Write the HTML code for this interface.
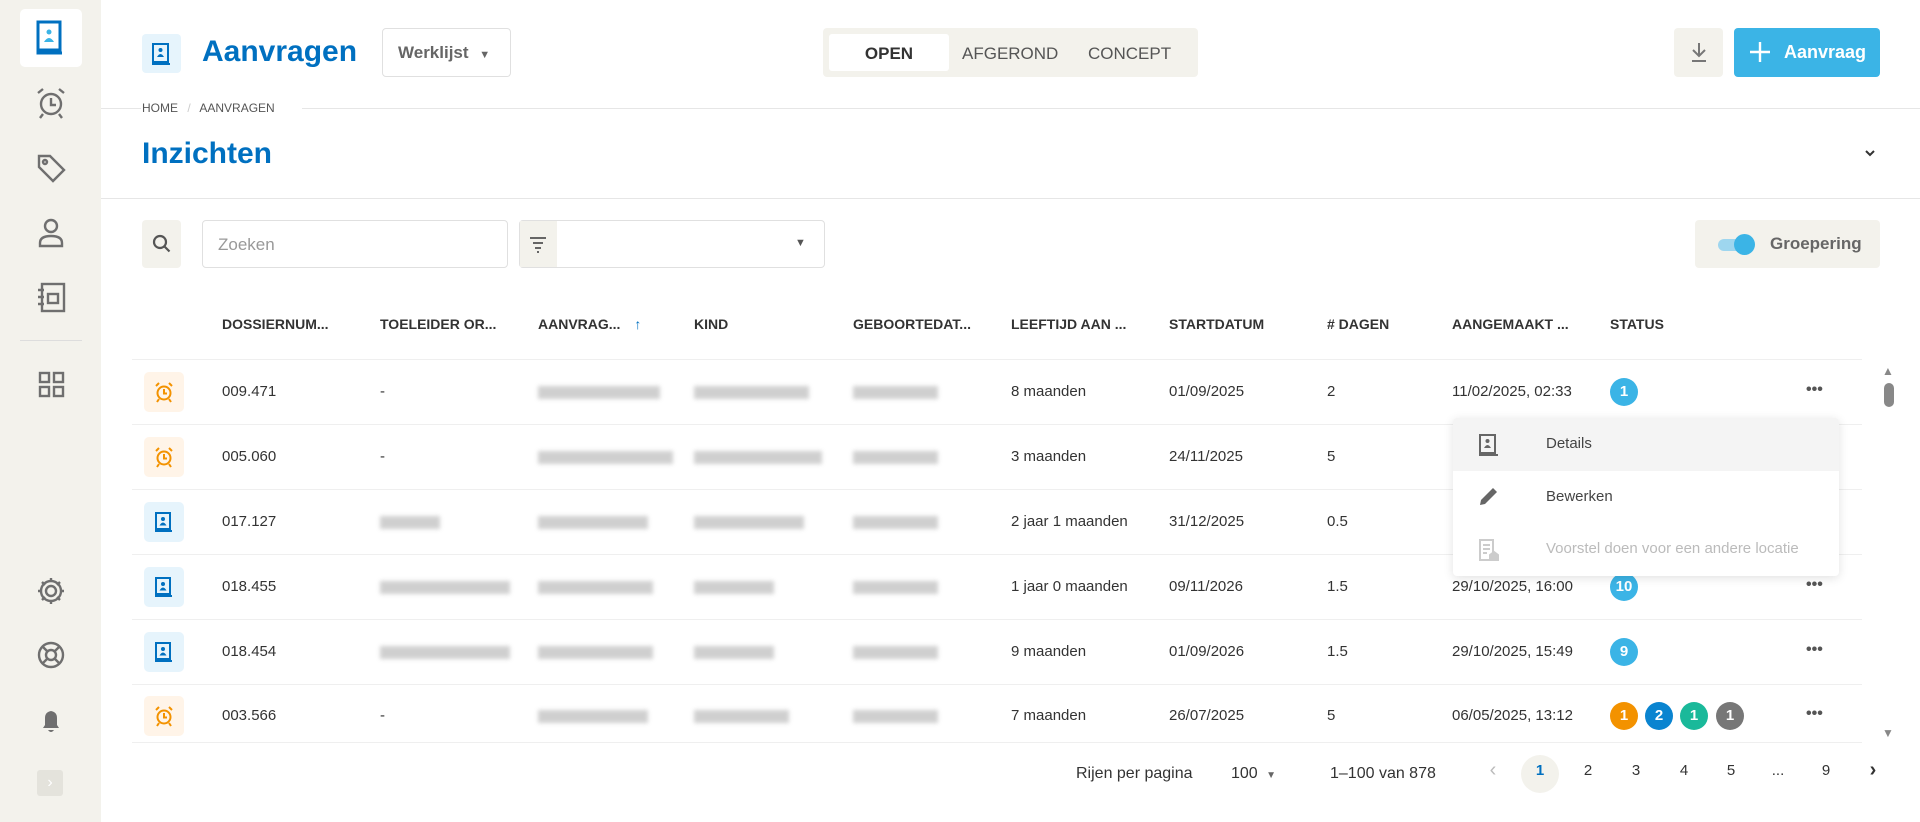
<!DOCTYPE html>
<html><head><meta charset="utf-8"><style>
*{box-sizing:border-box;margin:0;padding:0}
body{width:1920px;height:822px;overflow:hidden;background:#fff;font-family:"Liberation Sans",sans-serif;color:#333;position:relative}
.a{position:absolute}
.sb{left:0;top:0;width:101px;height:822px;background:#f3f2ec}
.ic{position:absolute;left:31px;width:40px;height:40px}
.t{position:absolute;font-size:15px;color:#333;white-space:nowrap}
.h{position:absolute;font-size:14px;font-weight:bold;color:#333;top:316px;white-space:nowrap}
.line{position:absolute;left:101px;height:1px;background:#e6e6e6}
.rl{position:absolute;left:132px;width:1730px;height:1px;background:#efefef}
.bl{position:absolute;height:13px;background:#c4c4c4;filter:blur(2px);opacity:.8}
.bd{position:absolute;width:28px;height:28px;border-radius:50%;color:#fff;font-weight:bold;font-size:15px;text-align:center;line-height:28px}
.rowic{position:absolute;left:144px;width:40px;height:40px;border-radius:5px}
.dots{position:absolute;left:1806px;font-size:16px;color:#555;letter-spacing:0px;font-weight:bold}
.pg{position:absolute;top:762px;font-size:15px;color:#333;width:24px;text-align:center}
</style></head><body>
<div class="a sb"></div>
<div class="a" style="left:20px;top:9px;width:62px;height:58px;background:#fff;border-radius:5px"></div>
<svg class="a" style="left:36px;top:20px" width="30" height="36" viewBox="0 0 30 36"><rect x="2" y="2" width="22" height="28" fill="none" stroke="#0070c0" stroke-width="3"/><path d="M2 30v3h24" fill="none" stroke="#0070c0" stroke-width="3"/><circle cx="13" cy="12" r="2.5" fill="#3bb4e6"/><path d="M8 22q5-8 10 0z" fill="#3bb4e6"/></svg>
<svg class="ic" style="top:83px" viewBox="0 0 40 40" fill="none" stroke="#6f6f6f" stroke-width="2.4"><circle cx="20" cy="21" r="10"/><path d="M20 15v7h5M7 10l5-4M33 10l-5-4M12 31l-3 4M28 31l3 4"/></svg>
<svg class="ic" style="top:148px" viewBox="0 0 40 40" fill="none" stroke="#6f6f6f" stroke-width="2.4"><path d="M8 8h11l14 14-11 11L8 19z"/><circle cx="14" cy="14" r="2"/></svg>
<svg class="ic" style="top:213px" viewBox="0 0 40 40" fill="none" stroke="#6f6f6f" stroke-width="2.4"><circle cx="20" cy="13" r="6"/><path d="M9 33v-3q0-7 11-7t11 7v3z"/></svg>
<svg class="ic" style="top:277px" viewBox="0 0 40 40" fill="none" stroke="#6f6f6f" stroke-width="2.4"><rect x="11" y="7" width="22" height="27"/><rect x="17" y="17" width="10" height="9"/><path d="M7 13h6M7 20h6M7 27h6"/></svg>
<div class="a" style="left:20px;top:340px;width:62px;height:1px;background:#ddd"></div>
<svg class="ic" style="top:364px" viewBox="0 0 40 40" fill="none" stroke="#6f6f6f" stroke-width="2.4"><rect x="9" y="9" width="9" height="9"/><rect x="23" y="9" width="9" height="9"/><rect x="9" y="23" width="9" height="9"/><rect x="23" y="23" width="9" height="9"/></svg>
<svg class="ic" style="top:571px" viewBox="0 0 40 40" fill="none" stroke="#6f6f6f" stroke-width="2.4"><circle cx="20" cy="20" r="5"/><path d="M20 7v4M20 29v4M7 20h4M29 20h4M11 11l3 3M26 26l3 3M29 11l-3 3M14 26l-3 3"/><circle cx="20" cy="20" r="10"/></svg>
<svg class="ic" style="top:635px" viewBox="0 0 40 40" fill="none" stroke="#6f6f6f" stroke-width="2.4"><circle cx="20" cy="20" r="12"/><circle cx="20" cy="20" r="5"/><path d="M12 12l4 4M28 12l-4 4M12 28l4-4M28 28l-4-4"/></svg>
<svg class="ic" style="top:700px" viewBox="0 0 40 40"><path d="M12 28h16l-2-3v-7q0-6-6-7-6 1-6 7v7z M17 30h6q-3 4-6 0" fill="#6f6f6f"/></svg>
<div class="a" style="left:37px;top:770px;width:26px;height:26px;background:#e4e3dc;border-radius:3px;color:#fff;text-align:center;line-height:26px;font-size:16px">›</div>

<div class="a" style="left:142px;top:34px;width:39px;height:39px;background:#e6f4fc;border-radius:4px"></div>
<svg class="a" style="left:150px;top:42px" width="24" height="24" viewBox="0 0 24 24"><rect x="3" y="2" width="15" height="18" fill="none" stroke="#0070c0" stroke-width="2"/><path d="M3 20v2h17" fill="none" stroke="#0070c0" stroke-width="2"/><circle cx="10.5" cy="8" r="2" fill="#0070c0"/><path d="M7 15q3.5-6 7 0z" fill="#0070c0"/></svg>
<div class="a" style="left:202px;top:35px;font-size:30px;font-weight:bold;color:#0070c0">Aanvragen</div>
<div class="a" style="left:382px;top:28px;width:129px;height:49px;border:1px solid #e0e0e0;border-radius:4px;font-size:17px;color:#666;font-weight:bold;padding:14px 0 0 15px">Werklijst <span style="font-size:11px;margin-left:6px">▼</span></div>
<div class="a" style="left:823px;top:28px;width:375px;height:49px;background:#f3f2ec;border-radius:4px"></div>
<div class="a" style="left:829px;top:34px;width:120px;height:37px;background:#fff;border-radius:3px"></div>
<div class="a" style="left:829px;top:44px;width:120px;text-align:center;font-size:17px;font-weight:bold;color:#333">OPEN</div>
<div class="a" style="left:962px;top:44px;font-size:17px;color:#555">AFGEROND</div>
<div class="a" style="left:1088px;top:44px;font-size:17px;color:#555">CONCEPT</div>
<div class="a" style="left:1674px;top:28px;width:49px;height:49px;background:#f3f2ec;border-radius:4px"></div>
<svg class="a" style="left:1687px;top:40px" width="24" height="24" viewBox="0 0 24 24" fill="none" stroke="#777" stroke-width="2"><path d="M12 3v13M6 10l6 6 6-6M5 21h14"/></svg>
<div class="a" style="left:1734px;top:28px;width:146px;height:49px;background:#3bb4e6;border-radius:4px"></div>
<svg class="a" style="left:1748px;top:40px" width="24" height="24" viewBox="0 0 24 24" stroke="#fff" stroke-width="2.4"><path d="M12 2v20M2 12h20"/></svg>
<div class="a" style="left:1784px;top:42px;font-size:18px;font-weight:bold;color:#fff">Aanvraag</div>

<div class="line" style="top:108px;width:40px"></div>
<div class="line" style="top:108px;left:302px;width:1618px"></div>
<div class="a" style="left:142px;top:101px;font-size:12px;color:#555">HOME <span style="color:#ccc;margin:0 6px">/</span> AANVRAGEN</div>
<div class="a" style="left:142px;top:137px;font-size:30px;font-weight:bold;color:#0070c0">Inzichten</div>
<svg class="a" style="left:1864px;top:149px" width="12" height="8" viewBox="0 0 12 8" fill="none" stroke="#333" stroke-width="2"><path d="M2 2l4 4 4-4"/></svg>
<div class="line" style="top:198px;width:1819px"></div>

<div class="a" style="left:142px;top:220px;width:39px;height:48px;background:#f3f2ec;border-radius:4px"></div>
<svg class="a" style="left:151px;top:233px" width="22" height="22" viewBox="0 0 22 22" fill="none" stroke="#555" stroke-width="2.2"><circle cx="9" cy="9" r="6"/><path d="M13.5 13.5l5 5"/></svg>
<div class="a" style="left:202px;top:220px;width:306px;height:48px;border:1px solid #e0e0e0;border-radius:4px;font-size:17px;color:#999;padding:14px 0 0 15px">Zoeken</div>
<div class="a" style="left:519px;top:220px;width:306px;height:48px;border:1px solid #e0e0e0;border-radius:4px"></div>
<div class="a" style="left:520px;top:221px;width:37px;height:46px;background:#f3f2ec"></div>
<svg class="a" style="left:527px;top:233px" width="22" height="22" viewBox="0 0 22 22" stroke="#666" stroke-width="2"><path d="M3 5h16M6 10h10M8 15h6M10 19h2"/></svg>
<div class="a" style="left:795px;top:237px;font-size:11px;color:#555">▼</div>
<div class="a" style="left:1695px;top:220px;width:185px;height:48px;background:#f3f2ec;border-radius:4px"></div>
<div class="a" style="left:1718px;top:239px;width:30px;height:12px;background:#9ed6ef;border-radius:6px"></div>
<div class="a" style="left:1734px;top:234px;width:21px;height:21px;background:#3bb4e6;border-radius:50%"></div>
<div class="a" style="left:1770px;top:234px;font-size:17px;font-weight:bold;color:#666">Groepering</div>

<div class="h" style="left:222px">DOSSIERNUM...</div>
<div class="h" style="left:380px">TOELEIDER OR...</div>
<div class="h" style="left:538px">AANVRAG... <span style="color:#0070c0;margin-left:10px">↑</span></div>
<div class="h" style="left:694px">KIND</div>
<div class="h" style="left:853px">GEBOORTEDAT...</div>
<div class="h" style="left:1011px">LEEFTIJD AAN ...</div>
<div class="h" style="left:1169px">STARTDATUM</div>
<div class="h" style="left:1327px"># DAGEN</div>
<div class="h" style="left:1452px">AANGEMAAKT ...</div>
<div class="h" style="left:1610px">STATUS</div>

<div class="rl" style="top:359px"></div><div class="rl" style="top:424px"></div><div class="rl" style="top:489px"></div><div class="rl" style="top:554px"></div><div class="rl" style="top:619px"></div><div class="rl" style="top:684px"></div><div class="rl" style="top:742px"></div>

<div class="rowic" style="top:372px;background:#fff4e8"></div>
<div class="rowic" style="top:437px;background:#fff4e8"></div>
<div class="rowic" style="top:502px;background:#e6f4fc"></div>
<div class="rowic" style="top:567px;background:#e6f4fc"></div>
<div class="rowic" style="top:632px;background:#e6f4fc"></div>
<div class="rowic" style="top:696px;background:#fff4e8"></div>
<svg width="0" height="0" style="position:absolute"><defs>
<symbol id="al" viewBox="0 0 24 24"><g fill="none" stroke="#f39200" stroke-width="2"><circle cx="12" cy="13" r="6.5"/><path d="M12 9v4.5h3M4 6l3-3M20 6l-3-3M7 19l-2 3M17 19l2 3"/></g></symbol>
<symbol id="dc" viewBox="0 0 24 24"><rect x="4" y="3" width="14" height="16" fill="none" stroke="#0070c0" stroke-width="2"/><path d="M4 19v2h16" fill="none" stroke="#0070c0" stroke-width="2"/><circle cx="11" cy="9" r="2" fill="#0070c0"/><path d="M7.5 15.5q3.5-6 7 0z" fill="#0070c0"/></symbol></defs></svg>
<svg class="a" style="left:152px;top:380px" width="24" height="24"><use href="#al"/></svg>
<svg class="a" style="left:152px;top:445px" width="24" height="24"><use href="#al"/></svg>
<svg class="a" style="left:152px;top:510px" width="24" height="24"><use href="#dc"/></svg>
<svg class="a" style="left:152px;top:575px" width="24" height="24"><use href="#dc"/></svg>
<svg class="a" style="left:152px;top:640px" width="24" height="24"><use href="#dc"/></svg>
<svg class="a" style="left:152px;top:704px" width="24" height="24"><use href="#al"/></svg>

<div class="t" style="left:222px;top:383px">009.471</div><div class="t" style="left:380px;top:383px">-</div>
<div class="bl" style="left:538px;top:386px;width:122px"></div><div class="bl" style="left:694px;top:386px;width:115px"></div><div class="bl" style="left:853px;top:386px;width:85px"></div>
<div class="t" style="left:1011px;top:383px">8 maanden</div><div class="t" style="left:1169px;top:383px">01/09/2025</div><div class="t" style="left:1327px;top:383px">2</div><div class="t" style="left:1452px;top:383px">11/02/2025, 02:33</div>
<div class="bd" style="left:1610px;top:378px;background:#3bb4e6">1</div><div class="dots" style="top:381px">•••</div>

<div class="t" style="left:222px;top:448px">005.060</div><div class="t" style="left:380px;top:448px">-</div>
<div class="bl" style="left:538px;top:451px;width:135px"></div><div class="bl" style="left:694px;top:451px;width:128px"></div><div class="bl" style="left:853px;top:451px;width:85px"></div>
<div class="t" style="left:1011px;top:448px">3 maanden</div><div class="t" style="left:1169px;top:448px">24/11/2025</div><div class="t" style="left:1327px;top:448px">5</div>

<div class="t" style="left:222px;top:513px">017.127</div><div class="bl" style="left:380px;top:516px;width:60px"></div>
<div class="bl" style="left:538px;top:516px;width:110px"></div><div class="bl" style="left:694px;top:516px;width:110px"></div><div class="bl" style="left:853px;top:516px;width:85px"></div>
<div class="t" style="left:1011px;top:513px">2 jaar 1 maanden</div><div class="t" style="left:1169px;top:513px">31/12/2025</div><div class="t" style="left:1327px;top:513px">0.5</div>

<div class="t" style="left:222px;top:578px">018.455</div><div class="bl" style="left:380px;top:581px;width:130px"></div>
<div class="bl" style="left:538px;top:581px;width:115px"></div><div class="bl" style="left:694px;top:581px;width:80px"></div><div class="bl" style="left:853px;top:581px;width:85px"></div>
<div class="t" style="left:1011px;top:578px">1 jaar 0 maanden</div><div class="t" style="left:1169px;top:578px">09/11/2026</div><div class="t" style="left:1327px;top:578px">1.5</div><div class="t" style="left:1452px;top:578px">29/10/2025, 16:00</div>
<div class="bd" style="left:1610px;top:573px;background:#3bb4e6">10</div><div class="dots" style="top:576px">•••</div>

<div class="t" style="left:222px;top:643px">018.454</div><div class="bl" style="left:380px;top:646px;width:130px"></div>
<div class="bl" style="left:538px;top:646px;width:115px"></div><div class="bl" style="left:694px;top:646px;width:80px"></div><div class="bl" style="left:853px;top:646px;width:85px"></div>
<div class="t" style="left:1011px;top:643px">9 maanden</div><div class="t" style="left:1169px;top:643px">01/09/2026</div><div class="t" style="left:1327px;top:643px">1.5</div><div class="t" style="left:1452px;top:643px">29/10/2025, 15:49</div>
<div class="bd" style="left:1610px;top:638px;background:#3bb4e6">9</div><div class="dots" style="top:641px">•••</div>

<div class="t" style="left:222px;top:707px">003.566</div><div class="t" style="left:380px;top:707px">-</div>
<div class="bl" style="left:538px;top:710px;width:110px"></div><div class="bl" style="left:694px;top:710px;width:95px"></div><div class="bl" style="left:853px;top:710px;width:85px"></div>
<div class="t" style="left:1011px;top:707px">7 maanden</div><div class="t" style="left:1169px;top:707px">26/07/2025</div><div class="t" style="left:1327px;top:707px">5</div><div class="t" style="left:1452px;top:707px">06/05/2025, 13:12</div>
<div class="bd" style="left:1610px;top:702px;background:#f39200">1</div><div class="bd" style="left:1645px;top:702px;background:#0a84d0">2</div><div class="bd" style="left:1680px;top:702px;background:#1ab99a">1</div><div class="bd" style="left:1716px;top:702px;background:#777">1</div><div class="dots" style="top:705px">•••</div>

<div class="a" style="left:1882px;top:364px;font-size:12px;color:#888">▲</div>
<div class="a" style="left:1884px;top:383px;width:10px;height:24px;background:#888;border-radius:5px"></div>
<div class="a" style="left:1882px;top:726px;font-size:12px;color:#888">▼</div>

<div class="a" style="left:1453px;top:418px;width:386px;height:158px;background:#fff;border-radius:4px;box-shadow:0 2px 10px rgba(0,0,0,.12)"></div>
<div class="a" style="left:1453px;top:418px;width:386px;height:53px;background:#f4f4f4;border-radius:4px 4px 0 0"></div>
<svg class="a" style="left:1478px;top:433px" width="22" height="24" viewBox="0 0 22 24"><rect x="2" y="2" width="15" height="18" fill="none" stroke="#666" stroke-width="2"/><path d="M2 20v2h18" fill="none" stroke="#666" stroke-width="2"/><circle cx="9.5" cy="8" r="2" fill="#666"/><path d="M6 15q3.5-6 7 0z" fill="#666"/></svg>
<div class="a" style="left:1546px;top:435px;font-size:15px;color:#444">Details</div>
<svg class="a" style="left:1478px;top:485px" width="22" height="22" viewBox="0 0 22 22"><path d="M2 20l1-5L15 3l4 4L7 19z" fill="#666"/></svg>
<div class="a" style="left:1546px;top:488px;font-size:15px;color:#444">Bewerken</div>
<svg class="a" style="left:1478px;top:538px" width="22" height="24" viewBox="0 0 22 24" fill="none" stroke="#ccc" stroke-width="2"><path d="M2 2h13v20H2zM5 7h7M5 11h7M5 15h4"/><path d="M12 22v-5l4-3 4 3v5z" fill="#ccc"/></svg>
<div class="a" style="left:1546px;top:540px;font-size:15px;color:#bbb">Voorstel doen voor een andere locatie</div>

<div class="a" style="left:1076px;top:765px;font-size:16px;color:#333">Rijen per pagina</div>
<div class="a" style="left:1231px;top:765px;font-size:16px;color:#333">100 <span style="font-size:10px;color:#666;margin-left:4px">▼</span></div>
<div class="a" style="left:1330px;top:765px;font-size:16px;color:#333">1–100 van 878</div>
<div class="pg" style="left:1481px;color:#bbb;font-size:20px;top:759px">‹</div>
<div class="a" style="left:1521px;top:755px;width:38px;height:38px;border-radius:50%;background:#f3f2ec"></div>
<div class="pg" style="left:1528px;font-weight:bold;color:#0070c0">1</div>
<div class="pg" style="left:1576px">2</div><div class="pg" style="left:1624px">3</div><div class="pg" style="left:1672px">4</div><div class="pg" style="left:1719px">5</div><div class="pg" style="left:1766px">...</div><div class="pg" style="left:1814px">9</div>
<div class="pg" style="left:1861px;font-size:20px;top:759px;font-weight:bold">›</div>
</body></html>
